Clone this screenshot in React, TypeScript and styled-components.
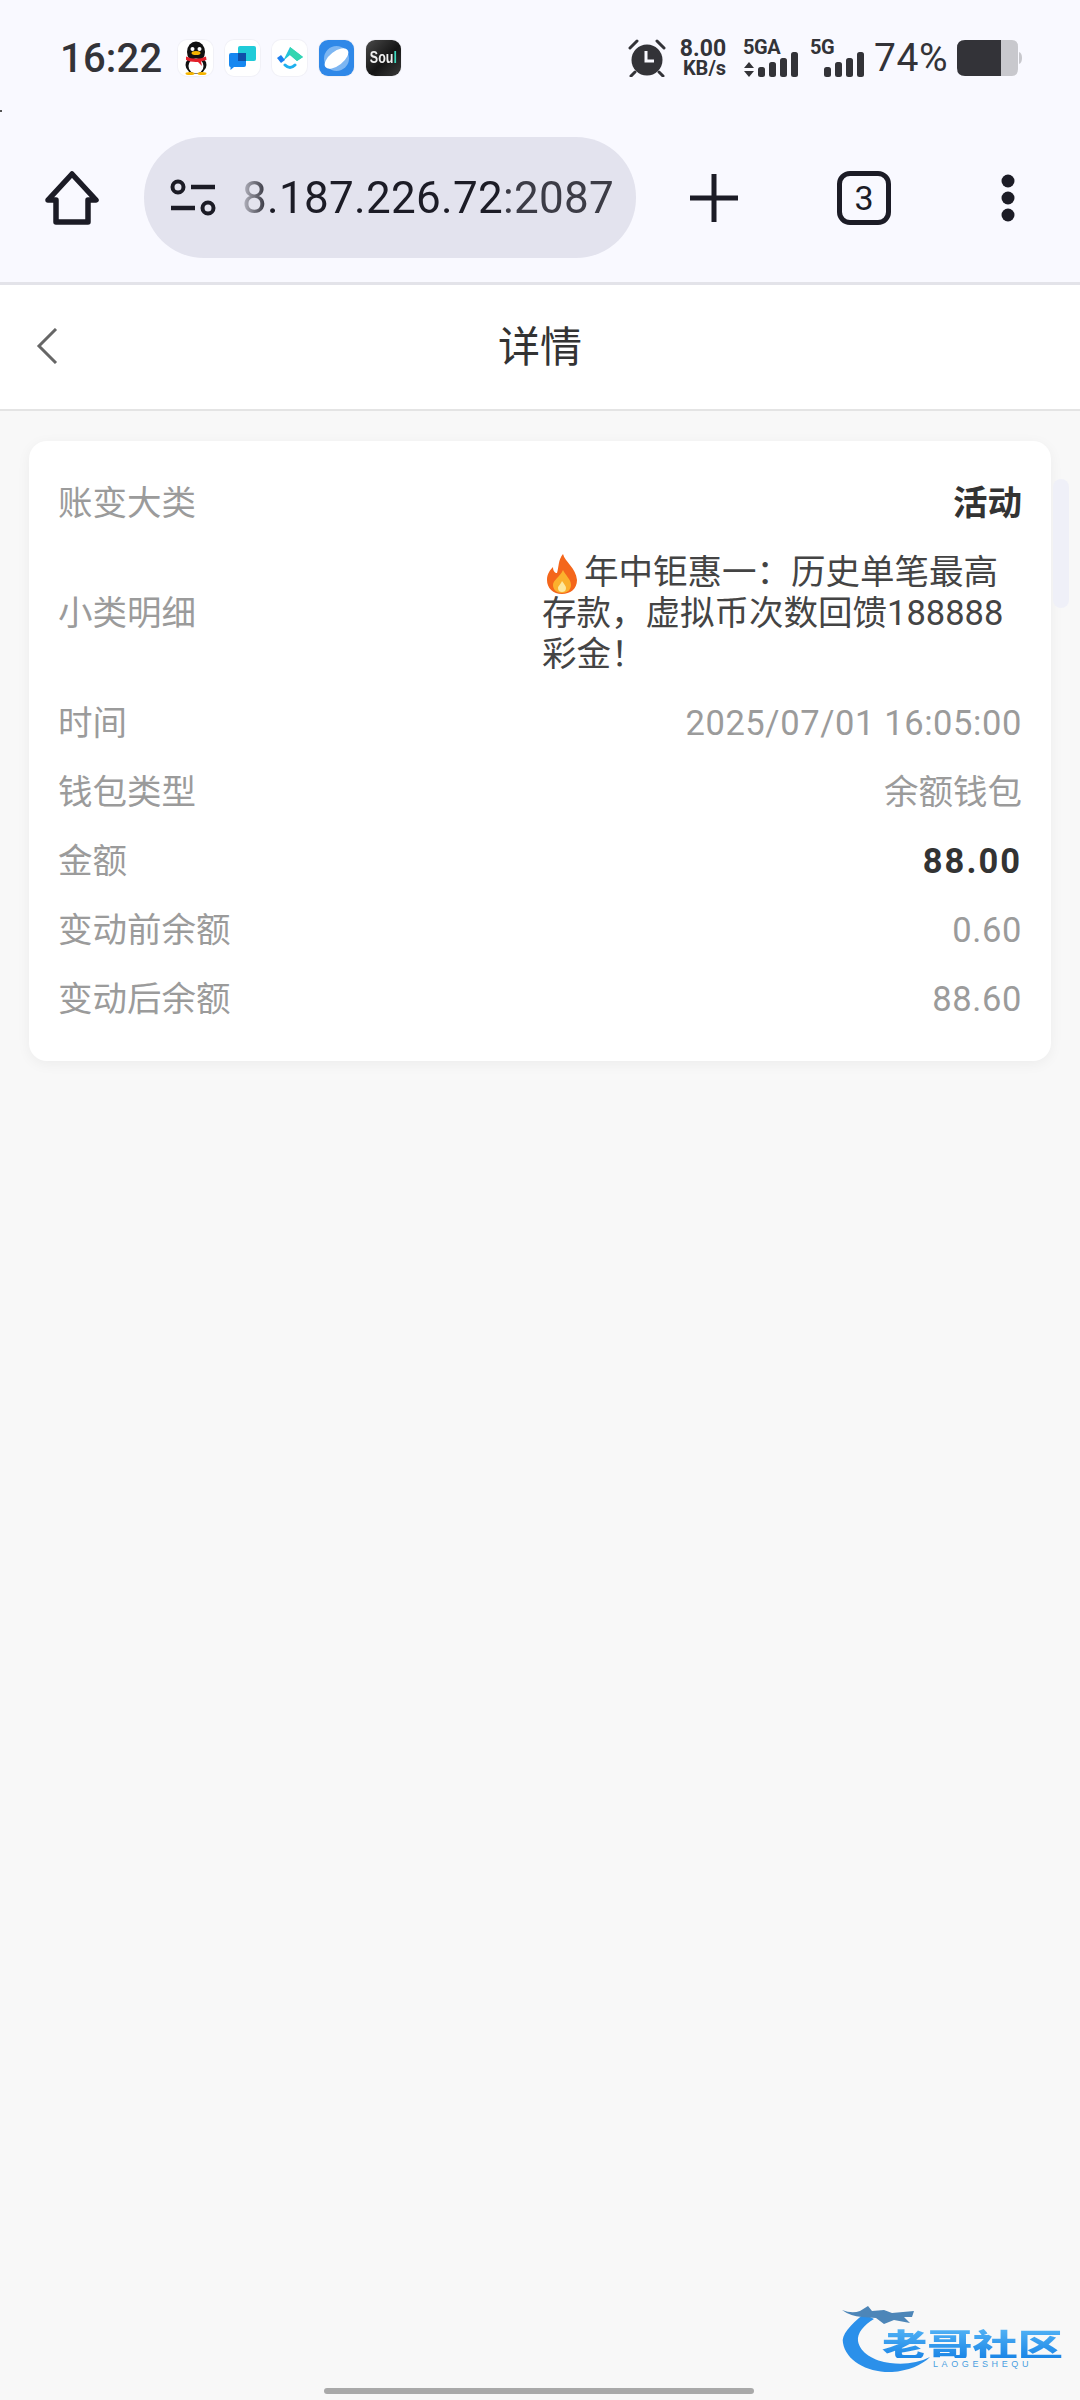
import React from 'react';
import styled, { createGlobalStyle } from 'styled-components';

const GlobalStyle = createGlobalStyle`
  html, body {
    margin: 0;
    padding: 0;
    background: #f8f8f8;
  }
  body {
    font-family: Roboto, "Noto Sans CJK SC", sans-serif;
  }
  * {
    box-sizing: border-box;
  }
`;

const Page = styled.div`
  width: 1080px;
  height: 2400px;
  position: relative;
  overflow: hidden;
  background: #f8f8f8;
`;

const StatusBar = styled.div`
  height: 116px;
  padding: 0 58px 0 60px;
  background: #f9f9ff;
  display: flex;
  align-items: center;
  color: #333338;
`;

const Time = styled.span`
  font-size: 40px;
  font-weight: 500;
  width: 118px;
  letter-spacing: 0.2px;
`;

const AppIcons = styled.div`
  display: flex;
  gap: 12px;
`;

const AppIcon = styled.div<{ $bg?: string }>`
  width: 35px;
  height: 36px;
  border-radius: 9px;
  background: ${(props) => props.$bg || '#fff'};
  overflow: hidden;
  display: flex;
  align-items: center;
  justify-content: center;
  box-shadow: 0 0 0 1px rgba(0, 0, 0, 0.03);
`;

const SoulText = styled.span`
  font-family: "Liberation Sans", sans-serif;
  font-size: 16px;
  font-weight: 700;
  color: #f0f0f0;
  transform: scaleX(0.78);

  b {
    color: #3ddbc0;
  }
`;

const StatusRight = styled.div`
  margin-left: auto;
  display: flex;
  align-items: center;
`;

const Speed = styled.div`
  width: 46px;
  margin-left: 14px;
  margin-right: 1px;
  display: flex;
  flex-direction: column;
  align-items: flex-end;
  font-weight: 700;
  line-height: 20px;
  font-size: 23px;

  small {
    font-size: 20px;
    line-height: 18px;
  }
`;

const Signal = styled.div<{ $w: number; $ml: number }>`
  width: ${(props) => props.$w}px;
  margin-left: ${(props) => props.$ml}px;
  height: 38px;
  position: relative;
  font-size: 20px;
  font-weight: 700;
  line-height: 17px;
  letter-spacing: -0.5px;
`;

const SignalBars = styled.svg`
  position: absolute;
  right: 0;
  bottom: 0;
`;

const UpDown = styled.svg`
  position: absolute;
  left: 1px;
  bottom: 0;
`;

const Percent = styled.span`
  font-size: 39px;
  font-weight: 400;
  margin-left: 10px;
  letter-spacing: 0.5px;
`;

const Battery = styled.svg`
  margin-left: 9px;
`;

const Toolbar = styled.div`
  height: 169px;
  padding-bottom: 3px;
  background: #f9f9ff;
  border-bottom: 3px solid #e3e3e9;
  display: grid;
  grid-template-columns: 144px 492px 156px 144px 144px;
  align-items: center;
  justify-items: center;
`;

const UrlPill = styled.div`
  width: 492px;
  height: 121px;
  border-radius: 60px;
  background: #e3e3ee;
  display: flex;
  align-items: center;
  padding-left: 26px;
`;

const TuneIcon = styled.svg`
  flex-shrink: 0;
`;

const UrlText = styled.div`
  margin-left: 26px;
  font-size: 44px;
  letter-spacing: 0.3px;
  color: #1c1c26;
  white-space: nowrap;
  mask-image: linear-gradient(90deg, rgba(0, 0, 0, 0.2) 0, #000 28px);

  span {
    color: #3c3c46;
  }
`;

const TabCount = styled.div`
  width: 54px;
  height: 54px;
  border: 5px solid #1c1c26;
  border-radius: 13px;
  display: flex;
  align-items: center;
  justify-content: center;
  font-size: 34px;
  font-weight: 400;
  color: #1c1c26;
`;

const Header = styled.div`
  height: 126px;
  background: #fff;
  border-bottom: 2px solid #e4e4e4;
  display: grid;
  grid-template-columns: 1fr auto 1fr;
  align-items: center;
  padding: 0 36px 2px;
`;

const Title = styled.div`
  font-size: 42px;
  color: #333;
  margin-bottom: 6px;
`;

const Main = styled.div`
  padding: 30px 29px 0;
`;

const Card = styled.div`
  background: #fff;
  border-radius: 18px;
  padding: 42px 29px 41px 29px;
  box-shadow: 0 3px 14px rgba(0, 0, 0, 0.05);
  display: flex;
  flex-direction: column;
  gap: 28px;
`;

const Row = styled.div`
  display: flex;
  justify-content: space-between;
  align-items: center;
  font-size: 34.5px;
  line-height: 41px;
`;

const Label = styled.span`
  color: #9b9b9b;
`;

const Value = styled.span<{ $spacing: number }>`
  color: #9b9b9b;
  letter-spacing: ${(props) => props.$spacing}px;
`;

const Category = styled.span`
  color: #333;
  font-weight: 700;
`;

const Amount = styled.span`
  color: #333;
  font-weight: 700;
  letter-spacing: 2px;
`;

const LongValue = styled.div`
  width: 480px;
  color: #444;
`;

const Flame = styled.svg`
  width: 40px;
  height: 40px;
  margin: -8px 2px -8px 0;
  vertical-align: -2px;
`;

const ScrollThumb = styled.div`
  position: absolute;
  top: 479px;
  left: 1053px;
  width: 16px;
  height: 129px;
  border-radius: 8px;
  background: #eff0f8;
`;

const CornerMark = styled.div`
  position: absolute;
  top: 110px;
  left: 0;
  width: 2px;
  height: 2px;
  background: #555;
`;

const Watermark = styled.div`
  position: absolute;
  left: 842px;
  top: 2305px;
  width: 225px;
  height: 68px;
`;

const DragonMark = styled.svg`
  overflow: visible;
`;

const WatermarkName = styled.div`
  position: absolute;
  left: 40px;
  top: 22px;
  font-family: "Noto Sans CJK SC", sans-serif;
  font-size: 31px;
  line-height: 31px;
  font-weight: 900;
  white-space: nowrap;
  transform: scaleX(1.46);
  transform-origin: left center;
  background: linear-gradient(180deg, #55b4f6, #1b86e6);
  -webkit-background-clip: text;
  background-clip: text;
  color: transparent;
`;

const WatermarkSub = styled.div`
  position: absolute;
  left: 91px;
  top: 54px;
  font-family: "Liberation Sans", sans-serif;
  font-size: 9px;
  line-height: 10px;
  letter-spacing: 3.6px;
  color: #4a9fe0;
  white-space: nowrap;
`;

const HomeIndicator = styled.div`
  position: absolute;
  left: 324px;
  top: 2388px;
  width: 430px;
  height: 6px;
  border-radius: 3px;
  background: #a9a9a9;
`;

const Bars = () => (
  <SignalBars width="40" height="25" viewBox="0 0 40 25">
    <rect x="0" y="15" width="7" height="10" rx="2.5" fill="#333338" />
    <rect x="11" y="10" width="7" height="15" rx="2.5" fill="#333338" />
    <rect x="22" y="6" width="7" height="19" rx="2.5" fill="#333338" />
    <rect x="33" y="0" width="7" height="25" rx="2.5" fill="#333338" />
  </SignalBars>
);

const rows = [
  { label: '时间', value: '2025/07/01 16:05:00', spacing: 0.6 },
  { label: '钱包类型', value: '余额钱包', spacing: 0 },
  { label: '金额', value: '88.00', strong: true, spacing: 0 },
  { label: '变动前余额', value: '0.60', spacing: 0.6 },
  { label: '变动后余额', value: '88.60', spacing: 0.6 },
];

export default function App() {
  return (
    <Page>
      <GlobalStyle />
      <CornerMark />
      <StatusBar>
        <Time>16:22</Time>
        <AppIcons>
          <AppIcon>
            <svg width="30" height="34" viewBox="0 0 30 34">
              <ellipse cx="15" cy="11" rx="9" ry="10.5" fill="#111" />
              <ellipse cx="15" cy="24" rx="10.5" ry="9" fill="#111" />
              <ellipse cx="15" cy="25" rx="7.5" ry="7.5" fill="#fff" />
              <circle cx="11.5" cy="8" r="2" fill="#fff" />
              <circle cx="18.5" cy="8" r="2" fill="#fff" />
              <ellipse cx="15" cy="12" rx="4.5" ry="2" fill="#f5b400" />
              <path d="M5 15.5 Q15 20 25 15.5 L25.5 19 L20 20.5 L21 25 L17 21 Q10 21.5 5 19 Z" fill="#e3202a" />
              <ellipse cx="9" cy="32.5" rx="4.5" ry="1.5" fill="#f5b400" />
              <ellipse cx="21" cy="32.5" rx="4.5" ry="1.5" fill="#f5b400" />
            </svg>
          </AppIcon>
          <AppIcon>
            <svg width="27" height="24" viewBox="0 0 27 24">
              <path d="M9 2 Q9 0 11 0 H25 Q27 0 27 2 V13 Q27 15 25 15 H9 Z" fill="#20cbd8" />
              <path d="M0 9 Q0 7 2 7 H15 Q17 7 17 9 V19 Q17 21 15 21 H5 L1.5 24 V21 Q0 21 0 19 Z" fill="#1687f0" />
              <rect x="9" y="7" width="8" height="8" fill="#0f4fa8" />
            </svg>
          </AppIcon>
          <AppIcon>
            <svg width="26" height="26" viewBox="0 0 26 26">
              <path d="M13 2 L26 12 L20 16 L13 10 L6 16 Z" fill="#25c4d8" />
              <path d="M13 2 L26 12 L20 16 L13 10 Z" fill="#34d6b0" />
              <path d="M0 13 L4 10 L8 15 L4 18 Z" fill="#1c7ff0" />
              <path d="M8 20 Q13 25 18 20" fill="none" stroke="#1fb0ee" strokeWidth="3" strokeLinecap="round" />
            </svg>
          </AppIcon>
          <AppIcon $bg="#2f88e8">
            <svg width="27" height="27" viewBox="0 0 27 27">
              <circle cx="13.5" cy="13.5" r="12.5" fill="#7db6f2" />
              <ellipse cx="13.5" cy="13.5" rx="14" ry="7" fill="#fff" transform="rotate(-38 13.5 13.5)" />
            </svg>
          </AppIcon>
          <AppIcon $bg="linear-gradient(135deg, #4a4a4a, #151515 55%, #3a3a3a)">
            <SoulText>
              Sou<b>l</b>
            </SoulText>
          </AppIcon>
        </AppIcons>
        <StatusRight>
          <svg width="38" height="38" viewBox="0 0 38 38">
            <circle cx="19" cy="21" r="15.5" fill="#333338" />
            <path d="M18 12 V22 H26" fill="none" stroke="#f9f9ff" strokeWidth="3" />
            <path d="M2 9 L9 2 M36 9 L29 2 M7 33 L3 37 M31 33 L35 37" stroke="#333338" strokeWidth="3" strokeLinecap="round" />
          </svg>
          <Speed>
            8.00
            <small>KB/s</small>
          </Speed>
          <Signal $w={55} $ml={16}>
            5GA
            <UpDown width="10" height="15" viewBox="0 0 10 15">
              <path d="M5 0 L10 6 H0 Z M0 9 H10 L5 15 Z" fill="#333338" />
            </UpDown>
            <Bars />
          </Signal>
          <Signal $w={54} $ml={12}>
            5G
            <Bars />
          </Signal>
          <Percent>74%</Percent>
          <Battery width="65" height="36" viewBox="0 0 65 36">
            <path d="M44 0 H55 Q61 0 61 7 V29 Q61 36 55 36 H44 Z" fill="#c8c8cd" />
            <path d="M62 12 Q65 13 65 18 Q65 23 62 24 Z" fill="#c8c8cd" />
            <path d="M8 0 H44 V36 H8 Q0 36 0 28 V8 Q0 0 8 0 Z" fill="#333338" />
          </Battery>
        </StatusRight>
      </StatusBar>

      <Toolbar>
        <svg width="56" height="56" viewBox="0 0 56 56">
          <path d="M28 4 L52 30 H44 V52 H12 V30 H4 Z" fill="none" stroke="#1c1c26" strokeWidth="5.5" strokeLinejoin="round" />
        </svg>
        <UrlPill>
          <TuneIcon width="46" height="37" viewBox="0 0 46 37">
            <circle cx="8" cy="8" r="5.5" fill="none" stroke="#1c1c26" strokeWidth="4" />
            <path d="M21 8 H45" stroke="#1c1c26" strokeWidth="4.5" />
            <path d="M1 29 H25" stroke="#1c1c26" strokeWidth="4.5" />
            <circle cx="38" cy="29" r="5.5" fill="none" stroke="#1c1c26" strokeWidth="4" />
          </TuneIcon>
          <UrlText>
            8.187.226.72<span>:2087</span>
          </UrlText>
        </UrlPill>
        <svg width="48" height="48" viewBox="0 0 48 48">
          <path d="M24 0 V48 M0 24 H48" stroke="#1c1c26" strokeWidth="5" />
        </svg>
        <TabCount>3</TabCount>
        <svg width="14" height="48" viewBox="0 0 14 48">
          <circle cx="7" cy="7" r="6.5" fill="#1c1c26" />
          <circle cx="7" cy="24" r="6.5" fill="#1c1c26" />
          <circle cx="7" cy="41" r="6.5" fill="#1c1c26" />
        </svg>
      </Toolbar>

      <Header>
        <svg width="22" height="36" viewBox="0 0 22 36">
          <path d="M20 1 L3 18 L20 35" fill="none" stroke="#666" strokeWidth="3" />
        </svg>
        <Title>详情</Title>
      </Header>

      <Main>
        <Card>
          <Row>
            <Label>账变大类</Label>
            <Category>活动</Category>
          </Row>
          <Row>
            <Label>小类明细</Label>
            <LongValue>
              <Flame viewBox="0 0 38 40">
                <path d="M20 0 C22 8 33 14 34 26 C34 35 27 40 19 40 C10 40 4 34 4 26 C4 20 7 16 10 13 C10 17 12 19 14 19 C16 13 15 6 20 0 Z" fill="#f4661b" />
                <path d="M20 16 C22 21 28 25 28 31 C28 36 24 39 19 39 C14 39 10 36 10 31 C10 26 17 23 20 16 Z" fill="#fbb02d" />
                <path d="M19 27 C21 30 23 32 23 34 C23 37 21 38 19 38 C17 38 15 37 15 34 C15 32 18 30 19 27 Z" fill="#fde9a0" />
              </Flame>
              年中钜惠一：历史单笔最高存款，虚拟币次数回馈188888彩金！
            </LongValue>
          </Row>
          {rows.map((row) => (
            <Row key={row.label}>
              <Label>{row.label}</Label>
              {row.strong ? <Amount>{row.value}</Amount> : <Value $spacing={row.spacing}>{row.value}</Value>}
            </Row>
          ))}
        </Card>
      </Main>

      <ScrollThumb />

      <Watermark>
        <DragonMark width="90" height="68" viewBox="0 0 90 68">
          <path d="M22 9 C8 20 -1 30 1 38 C4 56 26 68 50 67 C66 66 80 60 88 52 C76 58 62 60 48 58 C32 56 18 48 16 36 C15 28 22 20 32 14 Z" fill="#2b90ea" />
          <path d="M0 5 Q10 9 18 6 L26 1 L30 6 L42 5 L50 8 L72 6 L70 12 L62 12 L68 18 L52 15 L42 19 L34 13 L20 12 Q8 11 0 5 Z" fill="#4d86b8" />
        </DragonMark>
        <WatermarkName>老哥社区</WatermarkName>
        <WatermarkSub>LAOGESHEQU</WatermarkSub>
      </Watermark>

      <HomeIndicator />
    </Page>
  );
}
